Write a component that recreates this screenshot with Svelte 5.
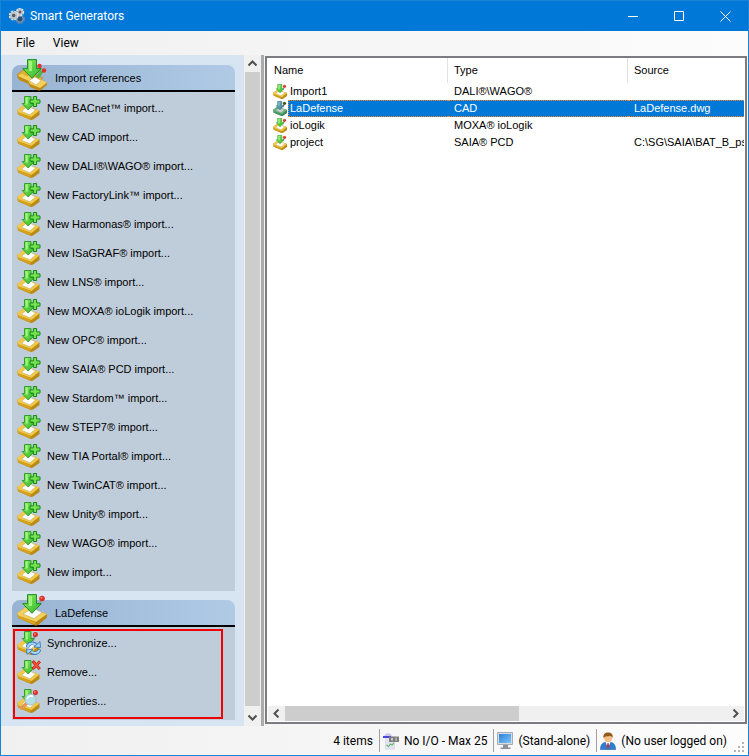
<script>
	let selected = $state('LaDefense');

	const imports = [
		'New BACnet™ import...',
		'New CAD import...',
		'New DALI®\\WAGO® import...',
		'New FactoryLink™ import...',
		'New Harmonas® import...',
		'New ISaGRAF® import...',
		'New LNS® import...',
		'New MOXA® ioLogik import...',
		'New OPC® import...',
		'New SAIA® PCD import...',
		'New Stardom™ import...',
		'New STEP7® import...',
		'New TIA Portal® import...',
		'New TwinCAT® import...',
		'New Unity® import...',
		'New WAGO® import...',
		'New import...'
	];

	const actions = [
		{ label: 'Synchronize...', badge: 'sync' },
		{ label: 'Remove...', badge: 'remove' },
		{ label: 'Properties...', badge: 'lens' }
	];

	const rows = [
		{ name: 'Import1', type: 'DALI®\\WAGO®', source: '' },
		{ name: 'LaDefense', type: 'CAD', source: 'LaDefense.dwg' },
		{ name: 'ioLogik', type: 'MOXA® ioLogik', source: '' },
		{ name: 'project', type: 'SAIA® PCD', source: 'C:\\SG\\SAIA\\BAT_B_ps' }
	];
</script>

{#snippet tray(badge)}
	<svg class="tray" viewBox="0 0 24 24" aria-hidden="true">
		<path d="M.3 14 6.500 9.500 22.500 14.500v4.500L16 23.500q-1.500.8-3.500 0L1 18.600z" fill="#bb8a14" />
		<path d="M.3 13.800 6.500 9.300 22.500 14.500l-8 6.500L1 16.400z" fill="#eec94c" />
		<path d="m.8 16 13.200 5.200-1 2.100L1.200 18.400z" fill="#d6a21c" />
		<path d="m4.500 15.300 6.500-5.300 7.500 4-5.500 4.800z" fill="#fff" stroke="#c9a95a" stroke-width=".5" />
		{#if badge !== 'plus' && badge !== 'remove'}
			<path d="m15.500 10 3-6" stroke="#8d949c" stroke-width="2" />
			<circle cx="18.400" cy="3.600" r="2.500" fill="#d92b24" />
			<circle cx="17.900" cy="3" r=".9" fill="#ff8474" />
		{/if}
		<path d="M7.500.500h6.500v7h3.200l-6 6.500-6-6.500h2.300z" fill="url(#green)" stroke="#2a9628" stroke-width=".9" />
		<path d="M8.700 1.500h2v7h-2z" fill="#a9f584" />
		{#if badge === 'plus'}
			<path d="M16.400.500h3.200v3.400H23v3.200h-3.400v3.400h-3.200V7.100H13V3.900h3.400z" fill="#74e34c" stroke="#16881a" />
		{:else if badge === 'remove'}
			<path d="m15 2 2-1.500 2.400 3L22 .8l1.500 1.700-2.600 2.700 2.500 3.100-1.800 1.200-2.400-2.600-2.400 2.600L15 8l2.600-2.800z" fill="#f4512c" stroke="#b51e13" stroke-width=".8" />
		{:else if badge === 'sync'}
			<path d="M10.500 16.500c.5-4 5-5.500 8.500-3" fill="none" stroke="#377bbd" stroke-width="3.600" />
			<path d="m17 16 6.500.500-.5-6z" fill="#9fd2f8" stroke="#377bbd" stroke-width=".9" />
			<path d="M10.800 16c.5-3.500 5-4.700 7.900-2.200" fill="none" stroke="#a9d8fa" stroke-width="2" />
			<path d="M22.500 18.500c-.8 3.700-5 5-8.300 2.700" fill="none" stroke="#377bbd" stroke-width="3.600" />
			<path d="m16 18.500-6.500-.5.500 5.500z" fill="#9fd2f8" stroke="#377bbd" stroke-width=".9" />
			<path d="M22.300 19c-.8 3-4.900 4-7.800 1.800" fill="none" stroke="#a9d8fa" stroke-width="2" />
		{:else if badge === 'lens'}
			<path d="m9.500 14.500-5 4.500" stroke="#e3965a" stroke-width="3.500" stroke-linecap="round" />
			<circle cx="13.500" cy="10.500" r="5.500" fill="#b2dfe8" stroke="#a5c0c6" />
			<path d="M10 10a4 4 0 0 1 6-2.500" fill="none" stroke="#fff" stroke-width="1.500" />
		{/if}
	</svg>
{/snippet}

{#snippet bigTray(double)}
	<svg class="big" viewBox="0 0 32 32" aria-hidden="true">
		{#if double}
			<path d="m.500 15 6-4 19 7.500-3 8L1 19z" fill="#e1b12e" stroke="#a77a0b" stroke-width=".6" />
			<path d="m17 14 4-7M22 18l4-7" stroke="#b5b9bd" stroke-width="2" />
			<path d="m20 19 5-7" stroke="#54b63c" stroke-width="3.500" />
			<circle cx="22.500" cy="7" r="2.200" fill="#e1322b" />
			<circle cx="27" cy="11.500" r="2.200" fill="#e1322b" />
			<path d="m1 17 4-2.500 5 3 3-2 17 8v2.500L24 31q-2 1-4 0l-7-3-1.500-3L2 21z" fill="#c08c16" />
			<path d="m1 17 4-2.500 5 3 3-2 17 8L23 29l-10-4-2-3.500z" fill="#f2d05c" />
			<path d="m12 21.500 6-3.500 6 3.500-5 4.500z" fill="#fff" stroke="#bf9d54" stroke-width=".5" />
		{:else}
			<path d="m.300 19 8.700-6 21 7v3.500l-9 7.500q-2 1-4 0L1 24z" fill="#b88612" />
			<path d="m.300 19 8.700-6 21 7-11 8L1 21.500z" fill="#f2d05c" />
			<path d="m1 21.500 17.500 7-1 2L1.500 24z" fill="#dba820" />
			<path d="m6 20 10-6 9 4.500-8 6z" fill="#fff" stroke="#bf9d54" stroke-width=".5" />
			<path d="m21 13 4-9" stroke="#999ea4" stroke-width="2" />
			<circle cx="25" cy="4.500" r="2.800" fill="#df2d26" />
			<circle cx="24.500" cy="3.800" r="1" fill="#ff8a7b" />
		{/if}
		<path d="M10.500.600h9v9h4.800L15 19.300 5.700 9.600h4.800z" fill="url(#green)" stroke="#258c24" />
		<path d="M12 2h3v10h-3z" fill="#a4f17f" />
	</svg>
{/snippet}

{#snippet chevron(d)}
	<svg viewBox="0 0 9 9" width="9" height="9" aria-hidden="true">
		<path {d} fill="none" stroke="#505050" stroke-width="2" />
	</svg>
{/snippet}

<div class="window">
	<svg class="defs" aria-hidden="true">
		<defs>
			<linearGradient id="green" x2="1" y2="1">
				<stop offset="0" stop-color="#8cf063" />
				<stop offset="1" stop-color="#2fb52a" />
			</linearGradient>
			<linearGradient id="screen" x2="1" y2="1">
				<stop offset="0" stop-color="#2a82dc" />
				<stop offset="1" stop-color="#7ec4f6" />
			</linearGradient>
		</defs>
	</svg>

	<header class="titlebar">
		<svg class="app-icon" viewBox="0 0 16 16" aria-hidden="true">
			<circle cx="11" cy="11" r="3.800" fill="none" stroke="#5b86b0" stroke-width="2.400" stroke-dasharray="2.200 .8" />
			<circle cx="11" cy="11" r="3.200" fill="#31506f" stroke="#7ba6cf" />
			<circle cx="11" cy="4" r="3" fill="none" stroke="#e2e4e6" stroke-width="2.400" stroke-dasharray="1.900 .6" />
			<circle cx="11" cy="4" r="2.200" fill="#5c5f64" stroke="#c6c9cd" stroke-width="1.400" />
			<circle cx="4.700" cy="7.500" r="3.700" fill="none" stroke="#dededd" stroke-width="2.400" stroke-dasharray="2.200 .7" />
			<circle cx="4.700" cy="7.500" r="2.600" fill="#55585c" stroke="#bfc1c3" stroke-width="1.800" />
		</svg>
		<h1>Smart Generators</h1>
		<div class="window-buttons">
			<button aria-label="Minimize">
				<svg viewBox="0 0 11 11"><path d="M0 5.500h10" /></svg>
			</button>
			<button aria-label="Maximize">
				<svg viewBox="0 0 11 11"><path d="M.5.5h9v9h-9z" /></svg>
			</button>
			<button aria-label="Close">
				<svg viewBox="0 0 11 11"><path d="m.5.500 10 10m0-10-10 10" /></svg>
			</button>
		</div>
	</header>

	<nav class="menu">
		<button>File</button>
		<button>View</button>
	</nav>

	<main>
		<aside>
			<section>
				<h2>{@render bigTray(true)}Import references</h2>
				<div class="group">
					{#each imports as label}
						<button class="task">{@render tray('plus')}{label}</button>
					{/each}
				</div>
			</section>
			<section>
				<h2>{@render bigTray(false)}LaDefense</h2>
				<div class="group">
					{#each actions as action}
						<button class="task">{@render tray(action.badge)}{action.label}</button>
					{/each}
					<div class="highlight"></div>
				</div>
			</section>
		</aside>

		<div class="vscroll">
			<button aria-label="Scroll up">{@render chevron('m.5 6.500 4-4 4 4')}</button>
			<div class="thumb"></div>
			<button aria-label="Scroll down">{@render chevron('m.5 2.500 4 4 4-4')}</button>
		</div>
		<div class="splitter"></div>

		<div class="list">
			<div class="table-wrap">
				<table>
					<thead>
						<tr>
							<th class="col">Name</th>
							<th class="col">Type</th>
							<th>Source</th>
						</tr>
					</thead>
					<tbody>
						{#each rows as row}
							<tr class:selected={row.name === selected} onclick={() => (selected = row.name)}>
								<td class="name">
									<div>{@render tray('pin')}<span>{row.name}</span></div>
								</td>
								<td>{row.type}</td>
								<td>{row.source}</td>
							</tr>
						{/each}
					</tbody>
				</table>
			</div>
			<div class="hscroll">
				<button aria-label="Scroll left">{@render chevron('m6.500.500-4 4 4 4')}</button>
				<div class="track"><div class="thumb"></div></div>
				<button aria-label="Scroll right">{@render chevron('m2.500.500 4 4-4 4')}</button>
			</div>
		</div>
	</main>

	<footer>
		<span class="cell">4 items</span>
		<span class="cell">
			<svg viewBox="0 0 16 18" aria-hidden="true">
				<path d="M2.500 5h9v12h-9z" fill="#e3e3f2" stroke="#cfcfe2" stroke-width=".6" />
				<path d="M1 4.500C2 0 8 0 9.500 4.500z" fill="#c9c7ee" />
				<path d="M0 4h8v2H0z" fill="#4a43dd" />
				<path d="M6 4.500h10v5.500H6z" fill="#7d7d7d" />
				<path d="M8 6h2v2.500H8zM12.500 5.500h1.200v3.500h-1.200z" fill="#c5c5c5" />
				<path d="m3.500 13 2 1.500 2-2.500 1.500 1 2-2" fill="none" stroke="#63b865" stroke-width="1.200" />
			</svg>
			No I/O - Max 25
		</span>
		<span class="cell">
			<svg viewBox="0 0 16 18" aria-hidden="true">
				<path d="M.5.500h15v12H.5z" fill="#d9dde1" stroke="#a4abb2" />
				<path d="M2 2h12v9H2z" fill="url(#screen)" />
				<path d="M6 13h5v2.500h2.500V17h-10v-1.500H6z" fill="#8b9197" />
			</svg>
			(Stand-alone)
		</span>
		<span class="cell">
			<svg viewBox="0 0 16 18" aria-hidden="true">
				<path d="M.5 17.500c0-5 2-7.500 7.500-7.500s7.500 2.500 7.500 7.500z" fill="#2e7ed6" stroke="#1c5fae" stroke-width=".6" />
				<path d="m5.500 10 2.500 6 2.500-6z" fill="#fff" />
				<path d="M7.500 11h1l.8 4L8 17l-1.300-2z" fill="#d32a20" />
				<circle cx="8" cy="6" r="4" fill="#f5be86" />
				<path d="M3.500 6C3 2 5 .500 8 .500s5.500 1.500 4.500 5.500L11 4 5.500 4.500z" fill="#93591d" />
			</svg>
			(No user logged on)
		</span>
		<svg class="grip" viewBox="0 0 11 11" aria-hidden="true">
			<path d="M8 0h2v2H8zM4 4h2v2H4zM8 4h2v2H8zM0 8h2v2H0zM4 8h2v2H4zM8 8h2v2H8z" fill="#b5b5b5" />
		</svg>
	</footer>
</div>

<style>
	:global(body) {
		margin: 0;
	}

	* {
		box-sizing: border-box;
	}

	button {
		border: none;
		padding: 0;
		background: none;
		font: inherit;
		color: inherit;
	}

	svg {
		display: block;
		flex: none;
	}

	.defs {
		position: absolute;
		width: 0;
		height: 0;
	}

	.window {
		display: flex;
		flex-direction: column;
		min-height: 100vh;
		border: 1px solid #1883d7;
		background: linear-gradient(90deg, #f0f0f0, #fcfcfc);
		font-family: Roboto, 'Open Sans', sans-serif;
		font-size: 12px;
		color: #000;
	}

	.titlebar {
		display: flex;
		align-items: center;
		height: 30px;
		padding-left: 8px;
		background: #0078d7;
		color: #fff;
	}

	.app-icon {
		width: 16px;
		height: 16px;
	}

	h1 {
		flex: 1;
		margin: 0 0 0 5px;
		font-size: 12px;
		font-weight: 400;
	}

	.window-buttons {
		display: flex;
	}

	.window-buttons button {
		display: flex;
		align-items: center;
		justify-content: center;
		width: 46px;
		height: 30px;
	}

	.window-buttons svg {
		width: 11px;
		height: 11px;
		fill: none;
		stroke: #fff;
	}

	.menu {
		display: flex;
		gap: 18px;
		height: 24px;
		padding-left: 15px;
	}

	main {
		display: flex;
		flex: 1;
		font-family: 'Liberation Sans', Arial, sans-serif;
		font-size: 11px;
	}

	aside {
		display: flex;
		flex-direction: column;
		gap: 9px;
		width: 243px;
		padding: 10px 9px 6px 11px;
		background: #d7e4f2;
	}

	h2 {
		display: flex;
		align-items: center;
		gap: 6px;
		height: 27px;
		margin: 0;
		padding-left: 5px;
		border-bottom: 2px solid #000;
		border-radius: 8px 8px 0 0;
		background: linear-gradient(90deg, #98b4d2, #b0cae6);
		font-size: 11px;
		font-weight: 400;
	}

	.big {
		width: 32px;
		height: 32px;
		margin-top: -5px;
	}

	.group {
		position: relative;
		padding: 1px 0 5px;
		background: #bfccd9;
	}

	.task {
		display: flex;
		align-items: center;
		gap: 6px;
		width: 100%;
		height: 29px;
		padding-left: 5px;
	}

	.tray {
		width: 24px;
		height: 24px;
	}

	.highlight {
		position: absolute;
		inset: 2px 12px 1px 1px;
		border: 2px solid #f00000;
		pointer-events: none;
	}

	.vscroll {
		display: flex;
		flex-direction: column;
		width: 17px;
		padding: 0 1px;
		background: #f0f0f0;
	}

	.vscroll button {
		display: flex;
		align-items: center;
		justify-content: center;
		height: 17px;
	}

	.vscroll .thumb {
		flex: 1;
		margin-bottom: 3px;
		background: #cdcdcd;
	}

	.splitter {
		width: 3px;
		background: #ababab;
	}

	.list {
		display: flex;
		flex: 1;
		flex-direction: column;
		min-width: 0;
		margin: 1px 1px 2px 1px;
		padding: 0 1px 1px;
		border: 2px solid #7b7b82;
		background: #fff;
	}

	.table-wrap {
		flex: 1;
		overflow: hidden;
	}

	table {
		width: 100%;
		table-layout: fixed;
		border-spacing: 0;
	}

	th,
	td {
		height: 17px;
		padding: 0 0 0 6px;
		overflow: hidden;
		font-weight: 400;
		line-height: 15px;
		text-align: left;
		white-space: nowrap;
	}

	td {
		border: 0 solid transparent;
		border-width: 1px 0;
	}

	th {
		height: 25px;
	}

	.col {
		width: 180px;
		border-right: 1px solid #e2e2e2;
	}

	td.name {
		padding: 0 0 0 5px;
		border: none;
	}

	.name div {
		display: flex;
		align-items: center;
	}

	.name .tray {
		width: 15px;
		height: 15px;
	}

	.name span {
		flex: 1;
		padding-left: 1px;
		border: 0 solid transparent;
		border-width: 1px 0 1px 1px;
	}

	.selected {
		color: #fff;
	}

	.selected td:not(.name),
	.selected span {
		border-color: #ff8728;
		border-style: dotted;
		background: #0078d7;
	}

	.selected .tray {
		filter: hue-rotate(80deg) saturate(0.6) brightness(0.8);
	}

	.hscroll {
		display: flex;
		height: 15px;
		background: #f0f0f0;
	}

	.hscroll button {
		display: flex;
		align-items: center;
		justify-content: center;
		width: 17px;
	}

	.track {
		flex: 1;
	}

	.hscroll .thumb {
		width: 53%;
		height: 100%;
		background: #cdcdcd;
	}

	footer {
		display: flex;
		align-items: center;
		justify-content: flex-end;
		height: 29px;
		padding-right: 3px;
	}

	.cell {
		display: flex;
		align-items: center;
		gap: 5px;
		height: 23px;
		padding: 0 6px 0 3px;
		white-space: nowrap;
	}

	.cell + .cell {
		border-left: 1px solid #a0a0a0;
	}

	.cell svg {
		width: 16px;
		height: 18px;
	}

	footer .grip {
		align-self: flex-end;
		width: 11px;
		height: 11px;
		margin: 0 0 2px 1px;
	}
</style>
